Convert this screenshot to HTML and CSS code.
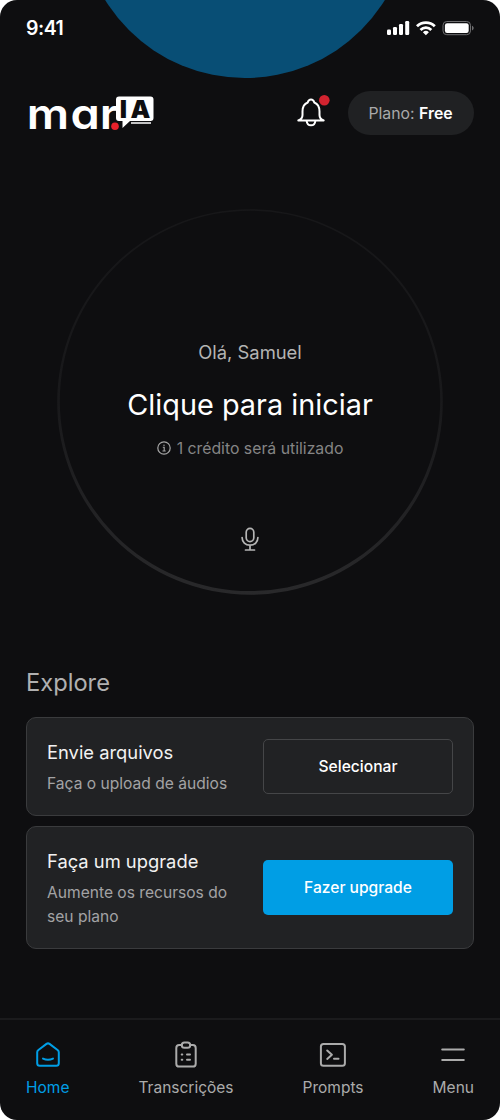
FILE: index.html
```
<!DOCTYPE html>
<html lang="pt-BR">
<head>
<meta charset="utf-8">
<title>mar.IA</title>
<link rel="stylesheet" href="styles.css">
</head>
<body>
<div class="phone">
  <div class="glow"></div>
  <div class="status">
    <span class="time">9:41</span>
    <svg class="status-icons" width="87" height="16" viewBox="0 0 87 16">
      <g fill="#fff">
        <rect x="0" y="9.5" width="4" height="5.5" rx="1.2"/>
        <rect x="6" y="7" width="4" height="8" rx="1.2"/>
        <rect x="12" y="4" width="4" height="11" rx="1.2"/>
        <rect x="18.2" y="1" width="4" height="14" rx="1.2"/>
      </g>
      <g fill="none" stroke="#fff" stroke-width="2.8">
        <path d="M30 6.3a12.5 12.5 0 0 1 17.8 0"/>
        <path d="M33.5 9.9a7.7 7.7 0 0 1 10.8 0"/>
      </g>
      <path d="M35.9 12.2a4.3 4.3 0 0 1 6 0l-3 3z" fill="#fff"/>
      <rect x="56" y="1.5" width="27.5" height="13.2" rx="3.8" fill="none" stroke="#6e6e70"/>
      <rect x="57.9" y="3.3" width="23.8" height="9.6" rx="2.2" fill="#fff"/>
      <path d="M85 5.8v4.600c1-.4 1.700-1.200 1.700-2.300s-.7-1.900-1.700-2.300z" fill="#6e6e70"/>
    </svg>
  </div>
  <header class="header">
    <svg class="logo" width="130" height="40" viewBox="0 0 130 40">
      <text class="logo-word" y="36" x="0.600 39.700 65.800" transform="scale(1.120 1)">mar</text>
      <g transform="translate(0 2)">
        <path d="M93 1.500h31.500a3 3 0 0 1 3 3v18.500a3 3 0 0 1-3 3h-20.500l-7.500 7v-7h-3.500a3 3 0 0 1-3-3v-18.500a3 3 0 0 1 3-3z" fill="#fff"/>
        <path d="M105 27.900h20" stroke="#fff" stroke-width="1.500"/>
        <text class="logo-ia" y="22.700" x="93.800 104.600">IA</text>
        <circle cx="89" cy="31.300" r="3.800" fill="#e8212b"/>
      </g>
    </svg>
    <div class="actions">
      <svg class="bell" width="34" height="36" viewBox="0 0 34 36">
        <g fill="none" stroke="#fff" stroke-width="2" stroke-linejoin="round">
          <path d="M2.300 26.500c3.200-1.200 4.200-2.300 4.200-5.500v-3.500c0-4.500 2-7.800 5.200-9 .6-2 1.600-3 3.300-3s2.700 1 3.300 3c3.200 1.200 5.200 4.500 5.200 9v3.500c0 3.200 1 4.300 4.200 5.500z"/>
          <path d="M10.700 27c.2 2.700 1.900 4.300 4.300 4.300s4.100-1.600 4.300-4.300"/>
        </g>
        <circle cx="28.300" cy="6.300" r="5.300" fill="#d2232f"/>
      </svg>
      <div class="plan">Plano: <b>Free</b></div>
    </div>
  </header>
  <main>
    <section class="dial">
      <svg class="ring" width="388" height="388" viewBox="0 0 388 388">
        <defs><linearGradient id="ring" x1="0" y1="0" x2="0" y2="1"><stop offset="0" stop-color="#171719"/><stop offset=".5" stop-color="#19191b"/><stop offset="1" stop-color="#29292b"/></linearGradient></defs>
        <path fill="url(#ring)" fill-rule="evenodd" d="M194 1.200a192.800 192.800 0 1 1 0 385.600a192.800 192.800 0 1 1 0-385.600zM194 2.700a190.200 190.200 0 1 0 0 380.400a190.200 190.200 0 1 0 0-380.400z"/>
      </svg>
      <div class="hello">Olá, Samuel</div>
      <h1>Clique para iniciar</h1>
      <div class="credit">
        <svg width="14" height="14" viewBox="0 0 14 14" fill="none" stroke="#a6a6a6"><circle cx="7" cy="7" r="6.200" stroke-width="1.200"/><path d="M5.800 6.300h1.400v3.700M5.500 10h3.200" stroke-width="1.100"/><circle cx="7" cy="4.200" r=".7" fill="#a6a6a6" stroke="none"/></svg>
        <span>1 crédito será utilizado</span>
      </div>
      <svg class="mic" width="20" height="25" viewBox="0 0 20 25" fill="none" stroke="#b5b5b5" stroke-width="1.700" stroke-linecap="round"><rect x="6.200" y="1.400" width="7.600" height="13.200" rx="3.800"/><path d="M2.100 10.500c0 4.500 3.300 7.700 7.900 7.700s7.900-3.200 7.900-7.700M10 18.500v4M5.500 23h9"/></svg>
    </section>
    <section class="explore">
      <h2>Explore</h2>
      <article class="card">
        <div class="copy"><h3>Envie arquivos</h3><p>Faça o upload de áudios</p></div>
        <button class="btn outline">Selecionar</button>
      </article>
      <article class="card tall">
        <div class="copy"><h3>Faça um upgrade</h3><p>Aumente os recursos do seu plano</p></div>
        <button class="btn primary">Fazer upgrade</button>
      </article>
    </section>
  </main>
  <nav class="tabs">
    <a class="tab active">
      <svg width="28" height="28" viewBox="0 0 28 28"><path d="M3.200 11.300c0-1 .4-1.700 1.200-2.300l8.100-6.100c1-.7 2-.7 3 0L23.600 9c.8.600 1.200 1.300 1.200 2.300v10.900c0 1.700-.9 2.600-2.600 2.600H5.800c-1.700 0-2.600-.9-2.600-2.600zM9 17.600c3.200 1.500 6.800 1.500 10 0"/></svg>
      <span>Home</span>
    </a>
    <a class="tab">
      <svg width="28" height="28" viewBox="0 0 28 28"><path d="M9.800 4.100H7.200c-1.800 0-2.900 1.100-2.900 2.900v15.700c0 1.800 1.100 2.900 2.900 2.900h13.600c1.800 0 2.900-1.100 2.900-2.900V7c0-1.800-1.100-2.900-2.900-2.900h-2.600"/><rect x="9.800" y="1.500" width="8.400" height="5.300" rx="2.600"/><path d="M9.700 13.500h.6M15 13.500h3M9.700 18.700h.6M15 18.700h3"/></svg>
      <span>Transcrições</span>
    </a>
    <a class="tab">
      <svg width="28" height="28" viewBox="0 0 28 28"><rect x="1.900" y="3" width="24" height="21.800" rx="2.600"/><path d="M8.200 9.500l4.700 4.200-4.700 4.200M15 17.700h4.500"/></svg>
      <span>Prompts</span>
    </a>
    <a class="tab">
      <svg width="28" height="28" viewBox="0 0 28 28"><path d="M3.200 8.500h21.600M3.200 19h21.600"/></svg>
      <span>Menu</span>
    </a>
  </nav>
</div>
</body>
</html>
```

FILE: styles.css
```
* { box-sizing: border-box; }
body { margin: 0; background: #fff; font-family: Inter, "Liberation Sans", sans-serif; color: #fff; }
h1, h2, h3, p { margin: 0; font-weight: 400; }
.phone { position: relative; width: 500px; height: 1120px; overflow: hidden; border-radius: 17px; background: #0e0e10; display: flex; flex-direction: column; }
.glow { position: absolute; left: 81px; top: -249.500px; width: 327.500px; height: 327.500px; border-radius: 50%; background: #084e75; }
.status { position: relative; display: flex; justify-content: space-between; align-items: center; height: 56px; padding: 0 26px; }
.time { font-size: 19.500px; font-weight: 600; letter-spacing: -.5px; }
.header { display: flex; justify-content: space-between; align-items: center; height: 44px; margin-top: 35px; padding: 0 26px; }
.logo { overflow: visible; }
.logo-word { font-size: 42px; font-weight: 600; fill: #fff; font-feature-settings: "cv11"; }
.logo-ia { font-size: 25px; font-weight: 900; fill: #0e0e10; }
.actions { display: flex; align-items: center; gap: 18px; }
.bell { margin-top: -2px; }
.plan { width: 126px; height: 44px; border-radius: 22px; background: #202123; color: #a9a9aa; font-size: 15.800px; line-height: 45px; text-align: center; padding-right: 1px; }
.plan b { color: #fff; font-weight: 600; }
.dial { position: relative; width: 388px; height: 388px; margin: 73px auto 0; display: flex; flex-direction: column; align-items: center; padding-top: 132px; }
.ring { position: absolute; inset: 0; }
.hello { font-size: 18.400px; line-height: 24px; color: #b4b4b4; }
.dial h1 { font-size: 28.850px; line-height: 40px; margin-top: 21px; }
.credit { display: flex; align-items: center; gap: 6px; height: 24px; margin-top: 11px; font-size: 15.800px; color: #858585; }
.mic { margin-top: 67px; }
.explore { padding: 0 26px; margin-top: 71px; }
.explore h2 { font-size: 23.700px; line-height: 32px; color: #b0b0b0; margin-bottom: 18px; }
.card { display: flex; align-items: center; justify-content: space-between; height: 99px; padding: 0 20px; border: 1px solid #3a3b3d; border-radius: 10px; background: #212224; margin-bottom: 10px; }
.tall { height: 123px; }
.copy { width: 196px; padding-top: 2px; }
.card h3 { font-size: 18.350px; line-height: 24px; color: #f2f2f2; margin-bottom: 8px; }
.card p { font-size: 15.600px; line-height: 23.400px; color: #a3a3a4; }
.btn { width: 190px; height: 55px; padding: 0; border-radius: 5px; font: 500 15.600px Inter, "Liberation Sans", sans-serif; color: #fff; }
.outline { border: 1px solid #454648; background: transparent; }
.primary { border: 0; background: #009ee5; }
.tabs { margin-top: auto; height: 102px; border-top: 2px solid #1b1b1d; padding: 21px 26px 0; display: flex; justify-content: space-between; }
.tab { display: flex; flex-direction: column; align-items: center; gap: 8px; font-size: 15.500px; line-height: 22px; color: #ababab; }
.tab svg { fill: none; stroke: currentColor; stroke-width: 2; stroke-linecap: round; stroke-linejoin: round; }
.active { color: #009ee5; }
```
